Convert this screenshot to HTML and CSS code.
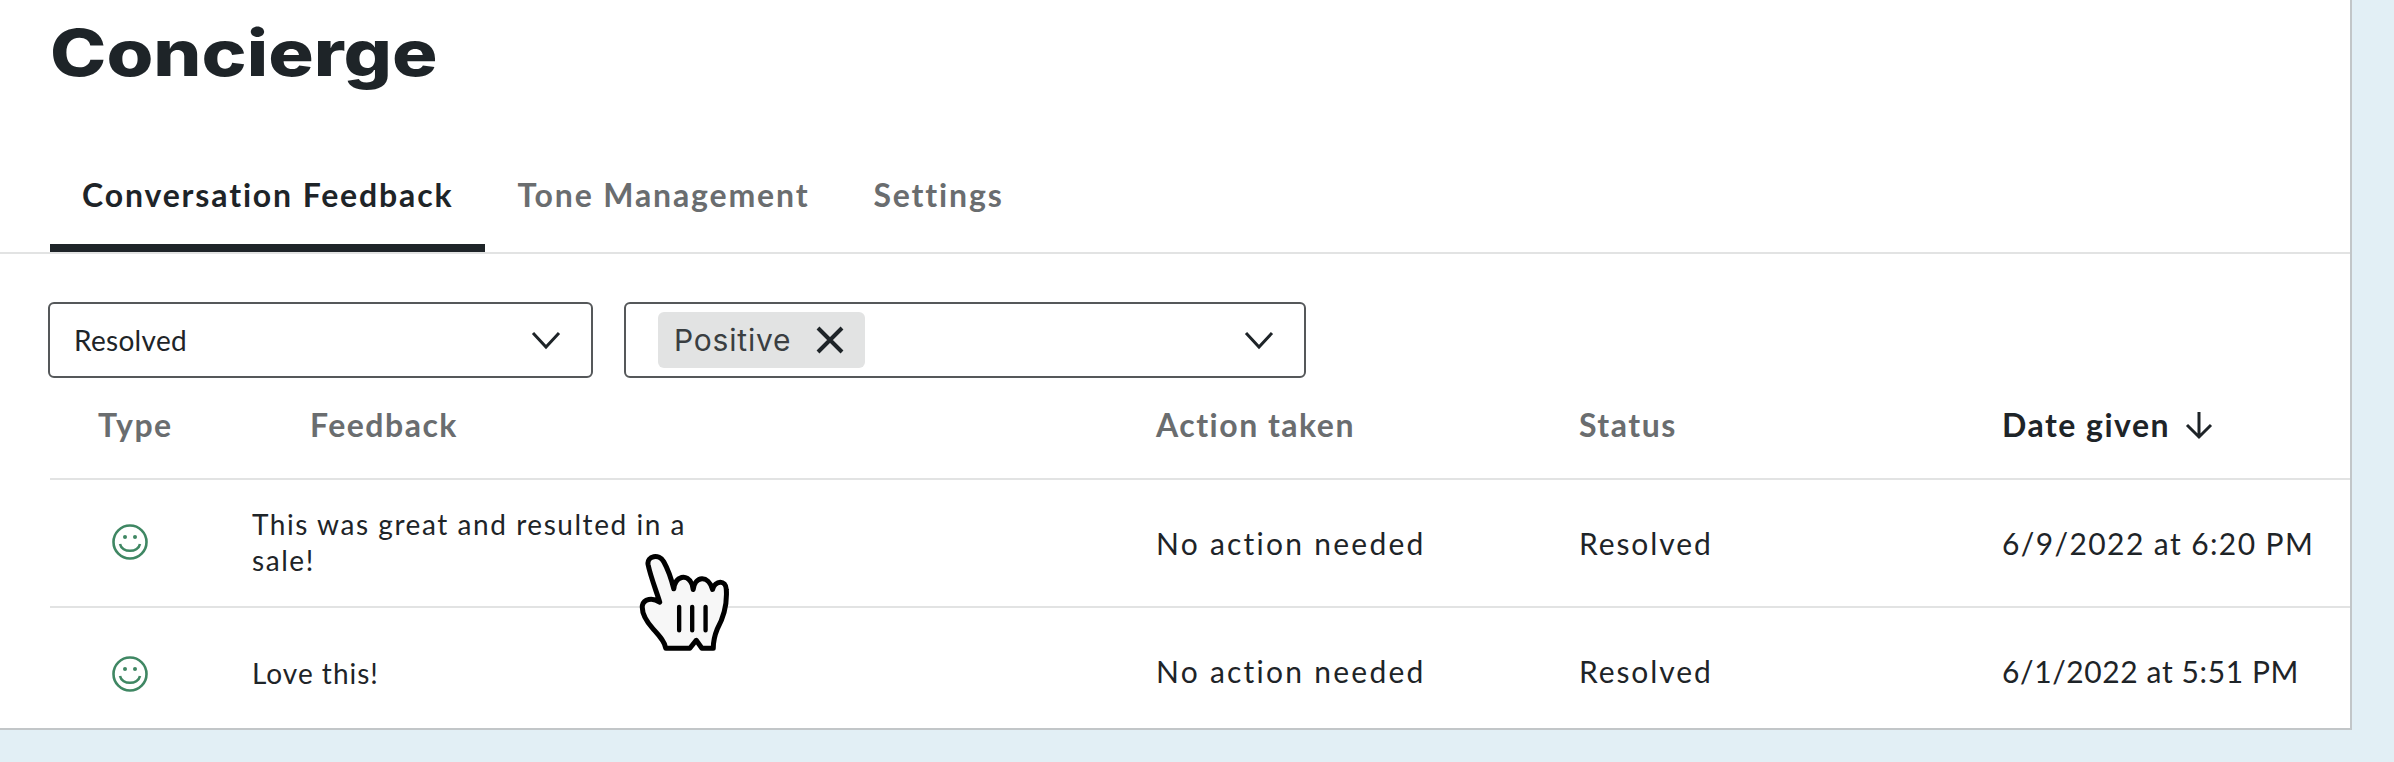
FILE: index.html
```html
<!DOCTYPE html>
<html lang="en">
<head>
<meta charset="utf-8">
<title>Concierge</title>
<link rel="stylesheet" href="styles.css">
</head>
<body>
<main class="panel">
  <h1 class="title">Concierge</h1>
  <nav class="tabs">
    <a class="tab active">Conversation Feedback</a>
    <a class="tab">Tone Management</a>
    <a class="tab">Settings</a>
  </nav>
  <div class="filters">
    <div class="select select-status">
      <span class="select-value">Resolved</span>
      <svg class="chevron" viewBox="0 0 30 20"><path d="M2 3 L15 17 L28 3"/></svg>
    </div>
    <div class="select select-type">
      <span class="chip">Positive
        <svg class="chip-x" viewBox="0 0 30 30"><path d="M3 3 L27 27 M27 3 L3 27"/></svg>
      </span>
      <svg class="chevron" viewBox="0 0 30 20"><path d="M2 3 L15 17 L28 3"/></svg>
    </div>
  </div>
  <div class="table">
    <div class="row head">
      <div class="cell c-type">Type</div>
      <div class="cell c-feedback">Feedback</div>
      <div class="cell">Action taken</div>
      <div class="cell">Status</div>
      <div class="cell sorted">Date given
        <svg class="arrow" viewBox="0 0 30 30"><path d="M15 2 V27 M3 15 L15 27 L27 15"/></svg>
      </div>
    </div>
    <div class="row first">
      <div class="cell c-icon">
        <svg class="smile" viewBox="0 0 36 36"><circle cx="18" cy="18" r="16.5"/><circle class="eye" cx="13" cy="13" r="2"/><circle class="eye" cx="23" cy="13" r="2"/><path d="M8 20 C10 29 26 29 28 20"/></svg>
      </div>
      <div class="cell c-text"><p class="text">This was great and resulted in a sale!</p></div>
      <div class="cell c-action">No action needed</div>
      <div class="cell c-status">Resolved</div>
      <div class="cell c-date">6/9/2022 at 6:20 PM</div>
    </div>
    <div class="row second">
      <div class="cell c-icon">
        <svg class="smile" viewBox="0 0 36 36"><circle cx="18" cy="18" r="16.5"/><circle class="eye" cx="13" cy="13" r="2"/><circle class="eye" cx="23" cy="13" r="2"/><path d="M8 20 C10 29 26 29 28 20"/></svg>
      </div>
      <div class="cell c-text"><p class="text">Love this!</p></div>
      <div class="cell c-action">No action needed</div>
      <div class="cell c-status">Resolved</div>
      <div class="cell c-date narrow">6/1/2022 at 5:51 PM</div>
    </div>
  </div>
  <svg class="cursor" viewBox="115 65 275 305">
    <path class="hand" d="M145 105 C141 80 178 72 192 97 C206 122 215 150 222 178 C226 140 262 130 277 165 L280 180 C285 140 325 135 338 180 C345 152 378 150 379 180 C382 225 372 262 352 298 C345 315 340 330 340 356 L306 356 L289 332 L270 356 L198 356 C195 335 178 318 160 298 C142 278 125 255 128 228 C132 208 158 203 180 218 C168 180 152 140 145 105 Z"/>
    <path class="bars" d="M238 232 V302 M277 232 V302 M317 232 V302"/>
  </svg>
</main>
</body>
</html>
```
FILE: styles.css
```css
* { box-sizing: border-box; }
html, body { margin: 0; height: 762px; overflow: hidden; }
body {
  background: #e2eff5;
  font-family: "Lato", "Noto Sans", sans-serif;
  color: #1e2428;
}
.panel {
  position: relative;
  width: 2352px;
  height: 730px;
  background: #fff;
  border-right: 2px solid #c2c6c8;
  border-bottom: 2px solid #c2c6c8;
  overflow: hidden;
}
.title {
  margin: 0;
  padding: 14px 0 0 50px;
  height: 154px;
  font-family: "Inter", sans-serif;
  font-size: 64px;
  line-height: 78px;
  font-weight: 800;
  color: #1e2428;
  transform: scaleX(1.185);
  transform-origin: 50px 0;
}
.tabs {
  display: flex;
  height: 100px;
  padding-left: 50px;
  border-bottom: 2px solid #e2e3e3;
}
.tab {
  display: flex;
  align-items: flex-start;
  height: 98px;
  padding: 21px 32px 0;
  font-size: 32px;
  line-height: 40px;
  font-weight: 700;
  letter-spacing: 1.85px;
  color: #6a6d6f;
}
.tab.active {
  color: #1e2428;
  border-bottom: 8px solid #1e2428;
}
.filters {
  display: flex;
  gap: 31px;
  padding: 48px 0 0 48px;
  height: 123px;
}
.select {
  display: flex;
  align-items: center;
  justify-content: space-between;
  height: 76px;
  border: 2px solid #55585a;
  border-radius: 6px;
}
.select-status { width: 545px; padding: 0 30px 0 24px; }
.select-type { width: 682px; padding: 0 30px 0 32px; }
.select-value { font-size: 28px; letter-spacing: 0.3px; }
.chevron { width: 30px; height: 20px; }
.chevron path, .chip-x path, .arrow path {
  fill: none;
  stroke: #1e2428;
  stroke-width: 3px;
}
.chip {
  display: flex;
  align-items: center;
  gap: 24px;
  height: 56px;
  padding: 0 20px 0 16px;
  background: #e2e3e3;
  border-radius: 6px;
  font-family: "Inter", sans-serif;
  font-size: 30px;
  letter-spacing: 0.8px;
  color: #3a3e41;
}
.chip-x { width: 30px; height: 30px; }
.chip-x path { stroke-width: 4px; }
.table { padding-left: 50px; }
.row {
  display: grid;
  grid-template-columns: 202px 904px 423px 423px 1fr;
  align-items: center;
  border-bottom: 2px solid #e2e3e3;
  font-size: 30px;
  letter-spacing: 1.1px;
}
.row.head {
  height: 103px;
  padding-bottom: 6px;
  font-size: 32px;
  font-weight: 700;
  letter-spacing: 1.5px;
  color: #6a6d6f;
}
.row.first { height: 128px; padding-bottom: 1px; }
.row.second { height: 125px; border-bottom: 0; }
.c-type { padding-left: 48px; }
.c-feedback { padding-left: 58px; }
.c-action { letter-spacing: 2.25px; }
.c-status { letter-spacing: 1.9px; }
.c-date { letter-spacing: 1.4px; }
.c-date.narrow { letter-spacing: 0.6px; }
.sorted { display: flex; align-items: center; gap: 14px; color: #1e2428; }
.arrow { width: 30px; height: 30px; }
.c-icon { display: flex; padding-left: 62px; }
.smile { width: 36px; height: 36px; }
.first .smile { margin-bottom: 1px; }
.second .smile { margin-top: 6px; }
.smile circle, .smile path { fill: none; stroke: #3f8763; stroke-width: 2.6px; }
.smile .eye { fill: #3f8763; stroke: none; }
.text { margin: 0; max-width: 450px; font-size: 28px; line-height: 36px; letter-spacing: 1.55px; }
.first .text { margin-bottom: 2px; }
.second .text { padding-top: 4px; letter-spacing: 1px; }
.cursor {
  position: absolute;
  left: 638px;
  top: 551px;
  width: 92px;
  height: 102px;
}
.hand { fill: #f7f7f7; stroke: #000; stroke-width: 15px; stroke-linejoin: round; }
.bars { fill: none; stroke: #000; stroke-width: 13px; stroke-linecap: round; }
```
